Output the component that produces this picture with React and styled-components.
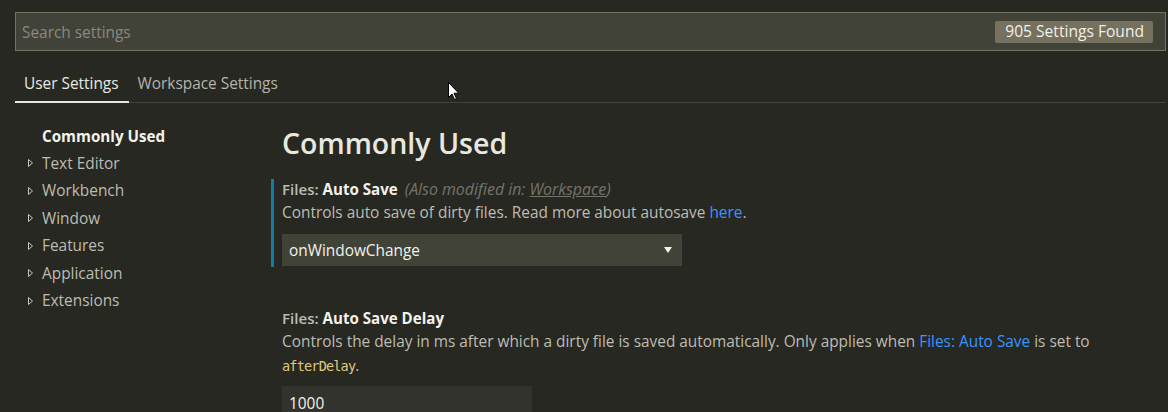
import React from 'react'
import styled, { createGlobalStyle } from 'styled-components'

const Global = createGlobalStyle`
  html, body { margin: 0; padding: 0; background: #272822; }
  body { font-family: "Open Sans", "Noto Sans", sans-serif; }
`

const Page = styled.div`
  position: relative;
  width: 1168px;
  height: 412px;
  overflow: hidden;
  background: #272822;
  color: #cfcfc2;
  font-size: 15.4px;
`

const SearchRow = styled.div`
  padding: 12px 2px 0 15px;
`

const SearchBox = styled.div`
  display: flex;
  align-items: center;
  justify-content: space-between;
  height: 36px;
  border: 1px solid #75715e;
  background: #414339;
  padding: 1px 12px 0 6px;
  box-sizing: content-box;
`

const Placeholder = styled.span`
  font-size: 15.4px;
  color: #8a897f;
`

const Badge = styled.span`
  background: #75715e;
  color: #f0f0ea;
  font-size: 15.6px;
  border-radius: 2px;
  padding: 0 9px 1px 10px;
  line-height: 21px;
`

const Tabs = styled.div`
  display: flex;
  margin: 19px 2px 0 15px;
  border-bottom: 1px solid #414339;
`

const Tab = styled.div`
  padding: 3px 10px 7px 9px;
  font-size: 15.4px;
  line-height: 21px;
  color: ${p => (p.$active ? '#e8e8e0' : '#b4b3ab')};
  border-bottom: 2px solid ${p => (p.$active ? '#e8e8e0' : 'transparent')};
  margin-bottom: -1px;
`

const Body = styled.div`
  display: flex;
  padding-top: 19px;
`

const Nav = styled.div`
  width: 271px;
  display: flex;
  flex-direction: column;
`

const NavItem = styled.div`
  display: flex;
  align-items: center;
  height: 27.5px;
  padding-left: 28px;
  font-size: ${p => (p.$bold ? '15.2px' : '15.4px')};
  color: ${p => (p.$bold ? '#f2f2ea' : '#bdbcb3')};
  font-weight: ${p => (p.$bold ? 700 : 400)};
`

const Twisty = styled.span`
  width: 14px;
  display: flex;
  align-items: center;
`

const Main = styled.div`
  flex: 1;
`

const Heading = styled.h1`
  margin: 3px 0 18px 11px;
  font-size: 28.5px;
  font-weight: 600;
  color: #e8e8e0;
  line-height: 36px;
`

const Setting = styled.div`
  border-left: 3px solid ${p => (p.$modified ? '#0e7ea6' : 'transparent')};
  padding: 0 0 1px 8px;
  margin-bottom: ${p => p.$gap || 0}px;
`

const Label = styled.div`
  line-height: 20px;
  font-size: 15.1px;
  color: #bdbcb3;
  font-weight: 600;
  b { color: #f2f2ea; font-weight: 700; }
`

const Note = styled.span`
  font-style: italic;
  font-weight: 400;
  font-size: 15.9px;
  color: #75746c;
  margin-left: 7px;
  u { text-decoration: underline; }
`

const Desc = styled.div`
  margin-top: 2px;
  line-height: 24px;
  color: #bdbcb3;
  font-size: 15.4px;
`

const Link = styled.span`
  color: #3794ff;
`

const Code = styled.code`
  font-family: "DejaVu Sans Mono", monospace;
  font-size: 13.5px;
  letter-spacing: -0.8px;
  color: #e0c97c;
`

const Select = styled.div`
  margin-top: 9px;
  width: 400px;
  height: 32px;
  background: #414339;
  display: flex;
  align-items: center;
  justify-content: space-between;
  padding: 0 10px 0 7px;
  box-sizing: border-box;
  color: #f2f2ea;
  font-size: 15.4px;
`

const NumberInput = styled.div`
  margin-top: 8px;
  width: 250px;
  height: 32px;
  background: #32332c;
  padding: 7px 0 0 7px;
  box-sizing: border-box;
  color: #f2f2ea;
  font-size: 15.4px;
`

const Cursor = styled.svg`
  position: absolute;
  left: 448px;
  top: 82px;
`

const Tri = () => (
  <svg width="5" height="8" viewBox="0 0 5 8">
    <path d="M0.5 0.5 L4.5 4 L0.5 7.5 Z" fill="none" stroke="#c8c8c0" strokeWidth="1" />
  </svg>
)

const navItems = ['Text Editor', 'Workbench', 'Window', 'Features', 'Application', 'Extensions']

export default function App() {
  return (
    <Page>
      <Global />
      <SearchRow>
        <SearchBox>
          <Placeholder>Search settings</Placeholder>
          <Badge>905 Settings Found</Badge>
        </SearchBox>
      </SearchRow>
      <Tabs>
        <Tab $active>User Settings</Tab>
        <Tab>Workspace Settings</Tab>
      </Tabs>
      <Body>
        <Nav>
          <NavItem $bold><Twisty />Commonly Used</NavItem>
          {navItems.map(n => (
            <NavItem key={n}><Twisty><Tri /></Twisty>{n}</NavItem>
          ))}
        </Nav>
        <Main>
          <Heading>Commonly Used</Heading>
          <Setting $modified $gap={41}>
            <Label>
              Files: <b>Auto Save</b>
              <Note>(Also modified in: <u>Workspace</u>)</Note>
            </Label>
            <Desc>Controls auto save of dirty files. Read more about autosave <Link>here</Link>.</Desc>
            <Select>
              <span>onWindowChange</span>
              <svg width="8" height="6" viewBox="0 0 8 6"><path d="M0 0 H8 L4 6 Z" fill="#f2f2ea" /></svg>
            </Select>
          </Setting>
          <Setting>
            <Label>Files: <b>Auto Save Delay</b></Label>
            <Desc>
              Controls the delay in ms after which a dirty file is saved automatically. Only applies when{' '}
              <Link>Files: Auto Save</Link> is set to<br />
              <Code>afterDelay</Code>.
            </Desc>
            <NumberInput>1000</NumberInput>
          </Setting>
        </Main>
      </Body>
      <Cursor width="12" height="19" viewBox="0 0 12 19">
        <path d="M0.5 0.5 L0.5 15.5 L4 12 L6.5 17.5 L8.5 16.6 L6 11.2 L10.8 11.2 Z" fill="#fff" stroke="#000" strokeWidth="1" />
      </Cursor>
    </Page>
  )
}
